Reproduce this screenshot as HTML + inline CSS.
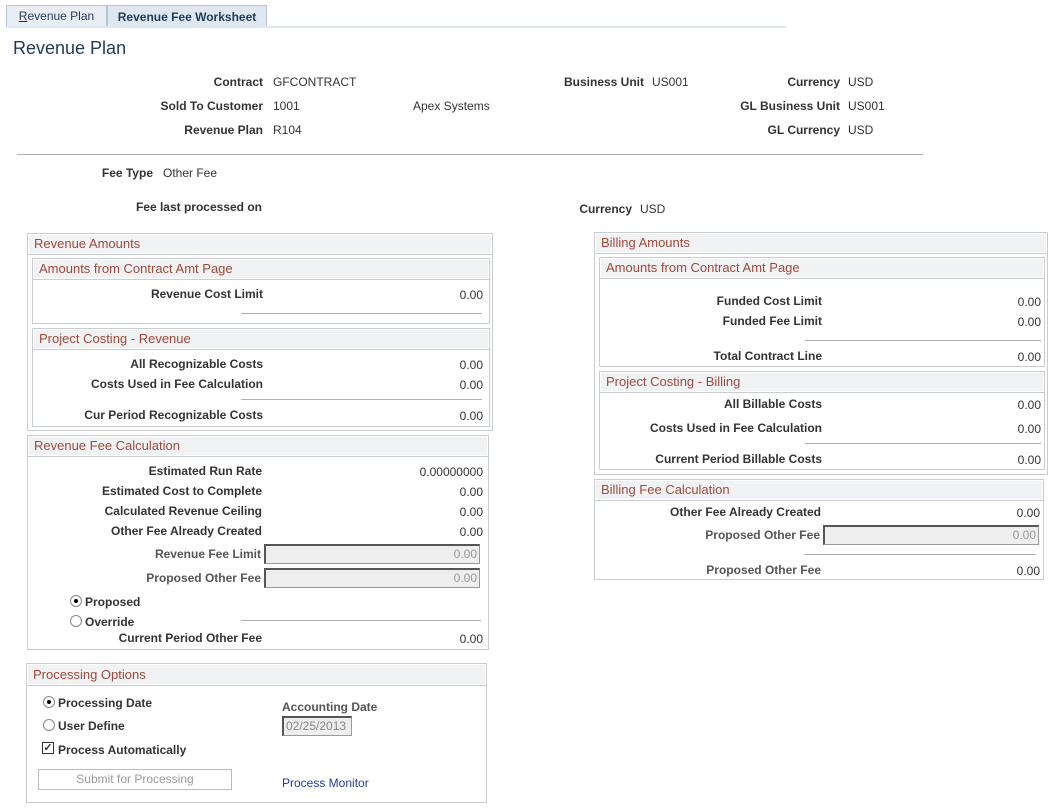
<!DOCTYPE html>
<html><head><meta charset="utf-8"><style>
body{margin:0;width:1058px;height:810px;position:relative;background:#fff;font-family:"Liberation Sans",Arial,sans-serif;font-size:12px;color:#333;overflow:hidden}
div,span{position:absolute;line-height:14px;white-space:nowrap}
.b{font-weight:bold}
.box{border:1px solid #c9ccd0;background:#fff}
.hd{left:0;right:0;top:0;height:20px;background:#f0f2f4;border-bottom:1px solid #c9ccd0;color:#a2483a;font-size:13px;line-height:20px;padding-left:6px;box-shadow:inset 0 0 0 1px #fff}
.ln{height:1px;background:#b0b0b0}
.inp{background:#eee;border:1px solid #999;border-top:2px solid #555;border-left:2px solid #555;color:#999;text-align:right;padding-right:2px;box-sizing:border-box;height:20px;line-height:17px}
.rad{width:10px;height:10px;border:1px solid #888;border-radius:50%;background:#fff}
.rad.on::after{content:"";position:absolute;left:3px;top:3px;width:4px;height:4px;border-radius:50%;background:#000}
</style></head><body>
<!-- tabs -->
<div style="left:6px;top:5px;width:99px;height:21px;border:1px solid #b5c5d5;background:#e8eef4;text-align:center;line-height:21px;font-size:12px;color:#1f3a5a"><u>R</u>evenue Plan</div>
<div style="left:107px;top:5px;width:158px;height:22px;border:1px solid #b5c5d5;border-bottom:none;background:#dfe8f1;text-align:center;line-height:22px;font-size:12px;color:#1f3a5a;font-weight:bold">Revenue Fee Worksheet</div>
<div style="left:6px;top:26px;width:780px;height:2px;background:#dfe8f1"></div>
<div style="left:13px;top:37px;font-size:18px;line-height:22px;color:#1f3a5a">Revenue Plan</div>

<span class="b" style="right:795px;top:75px">Contract</span><span style="left:273px;top:75px">GFCONTRACT</span>
<span class="b" style="right:795px;top:99px">Sold To Customer</span><span style="left:273px;top:99px">1001</span><span style="left:413px;top:99px">Apex Systems</span>
<span class="b" style="right:795px;top:123px">Revenue Plan</span><span style="left:273px;top:123px">R104</span>
<span class="b" style="right:414px;top:75px">Business Unit</span><span style="left:652px;top:75px">US001</span>
<span class="b" style="right:218px;top:75px">Currency</span><span style="left:848px;top:75px">USD</span>
<span class="b" style="right:218px;top:99px">GL Business Unit</span><span style="left:848px;top:99px">US001</span>
<span class="b" style="right:218px;top:123px">GL Currency</span><span style="left:848px;top:123px">USD</span>
<div class="ln" style="left:17px;top:154px;width:906px"></div>
<span class="b" style="right:905px;top:166px">Fee Type</span><span style="left:163px;top:166px">Other Fee</span>
<span class="b" style="right:796px;top:200px">Fee last processed on</span>
<span class="b" style="right:426px;top:202px">Currency</span><span style="left:640px;top:202px">USD</span>

<!-- Revenue Amounts -->
<div class="box" style="left:27px;top:233px;width:464px;height:196px"><div class="hd">Revenue Amounts</div></div>
<div class="box" style="left:32px;top:258px;width:456px;height:64px"><div class="hd">Amounts from Contract Amt Page</div></div>
<span class="b" style="right:795px;top:287px">Revenue Cost Limit</span><span style="right:575px;top:288px">0.00</span>
<div class="ln" style="left:241px;top:313px;width:241px"></div>
<div class="box" style="left:32px;top:328px;width:456px;height:97px"><div class="hd">Project Costing - Revenue</div></div>
<span class="b" style="right:795px;top:357px">All Recognizable Costs</span><span style="right:575px;top:358px">0.00</span>
<span class="b" style="right:795px;top:377px">Costs Used in Fee Calculation</span><span style="right:575px;top:378px">0.00</span>
<div class="ln" style="left:241px;top:399px;width:241px"></div>
<span class="b" style="right:795px;top:408px">Cur Period Recognizable Costs</span><span style="right:575px;top:409px">0.00</span>

<!-- Revenue Fee Calculation -->
<div class="box" style="left:27px;top:435px;width:460px;height:213px"><div class="hd">Revenue Fee Calculation</div></div>
<span class="b" style="right:796px;top:464px">Estimated Run Rate</span><span style="right:575px;top:465px">0.00000000</span>
<span class="b" style="right:796px;top:484px">Estimated Cost to Complete</span><span style="right:575px;top:485px">0.00</span>
<span class="b" style="right:796px;top:504px">Calculated Revenue Ceiling</span><span style="right:575px;top:505px">0.00</span>
<span class="b" style="right:796px;top:524px">Other Fee Already Created</span><span style="right:575px;top:525px">0.00</span>
<span class="b" style="right:797px;top:547px;color:#555">Revenue Fee Limit</span><div class="inp" style="left:264px;top:544px;width:216px">0.00</div>
<span class="b" style="right:797px;top:571px;color:#555">Proposed Other Fee</span><div class="inp" style="left:264px;top:568px;width:216px">0.00</div>
<div class="rad on" style="left:70px;top:595px"></div><span class="b" style="left:85px;top:595px">Proposed</span>
<div class="rad" style="left:70px;top:615px"></div><span class="b" style="left:85px;top:615px">Override</span>
<div class="ln" style="left:241px;top:620px;width:240px"></div>
<span class="b" style="right:796px;top:631px">Current Period Other Fee</span><span style="right:575px;top:632px">0.00</span>

<!-- Processing Options -->
<div class="box" style="left:26px;top:663px;width:459px;height:138px"><div class="hd" style="height:21px;line-height:21px">Processing Options</div></div>
<div class="rad on" style="left:43px;top:696px"></div><span class="b" style="left:58px;top:696px">Processing Date</span>
<div class="rad" style="left:43px;top:719px"></div><span class="b" style="left:58px;top:719px">User Define</span>
<div style="left:42px;top:742px;width:10px;height:10px;border:1px solid #333;background:#fff;font-size:11px;line-height:10px;text-align:center;font-weight:bold">✓</div><span class="b" style="left:58px;top:743px">Process Automatically</span>
<span class="b" style="left:282px;top:700px;color:#555">Accounting Date</span>
<div class="inp" style="left:282px;top:716px;width:70px;text-align:left;padding-left:2px;color:#888">02/25/2013</div>
<div style="left:38px;top:769px;width:192px;height:19px;border:1px solid #bbb;text-align:center;line-height:19px;color:#999">Submit for Processing</div>
<span style="left:282px;top:776px;color:#1c3f94">Process Monitor</span>

<!-- Billing Amounts -->
<div class="box" style="left:594px;top:232px;width:452px;height:241px"><div class="hd">Billing Amounts</div></div>
<div class="box" style="left:599px;top:257px;width:444px;height:108px"><div class="hd">Amounts from Contract Amt Page</div></div>
<span class="b" style="right:236px;top:294px">Funded Cost Limit</span><span style="right:17px;top:295px">0.00</span>
<span class="b" style="right:236px;top:314px">Funded Fee Limit</span><span style="right:17px;top:315px">0.00</span>
<div class="ln" style="left:805px;top:340px;width:236px"></div>
<span class="b" style="right:236px;top:349px">Total Contract Line</span><span style="right:17px;top:350px">0.00</span>
<div class="box" style="left:599px;top:371px;width:444px;height:97px"><div class="hd">Project Costing - Billing</div></div>
<span class="b" style="right:236px;top:397px">All Billable Costs</span><span style="right:17px;top:398px">0.00</span>
<span class="b" style="right:236px;top:421px">Costs Used in Fee Calculation</span><span style="right:17px;top:422px">0.00</span>
<div class="ln" style="left:805px;top:443px;width:236px"></div>
<span class="b" style="right:236px;top:452px">Current Period Billable Costs</span><span style="right:17px;top:453px">0.00</span>

<div class="box" style="left:594px;top:479px;width:448px;height:99px"><div class="hd">Billing Fee Calculation</div></div>
<span class="b" style="right:237px;top:505px">Other Fee Already Created</span><span style="right:18px;top:506px">0.00</span>
<span class="b" style="right:238px;top:528px;color:#555">Proposed Other Fee</span><div class="inp" style="left:823px;top:525px;width:216px">0.00</div>
<div class="ln" style="left:804px;top:554px;width:232px"></div>
<span class="b" style="right:237px;top:563px;color:#555">Proposed Other Fee</span><span style="right:18px;top:564px">0.00</span>
</body></html>
